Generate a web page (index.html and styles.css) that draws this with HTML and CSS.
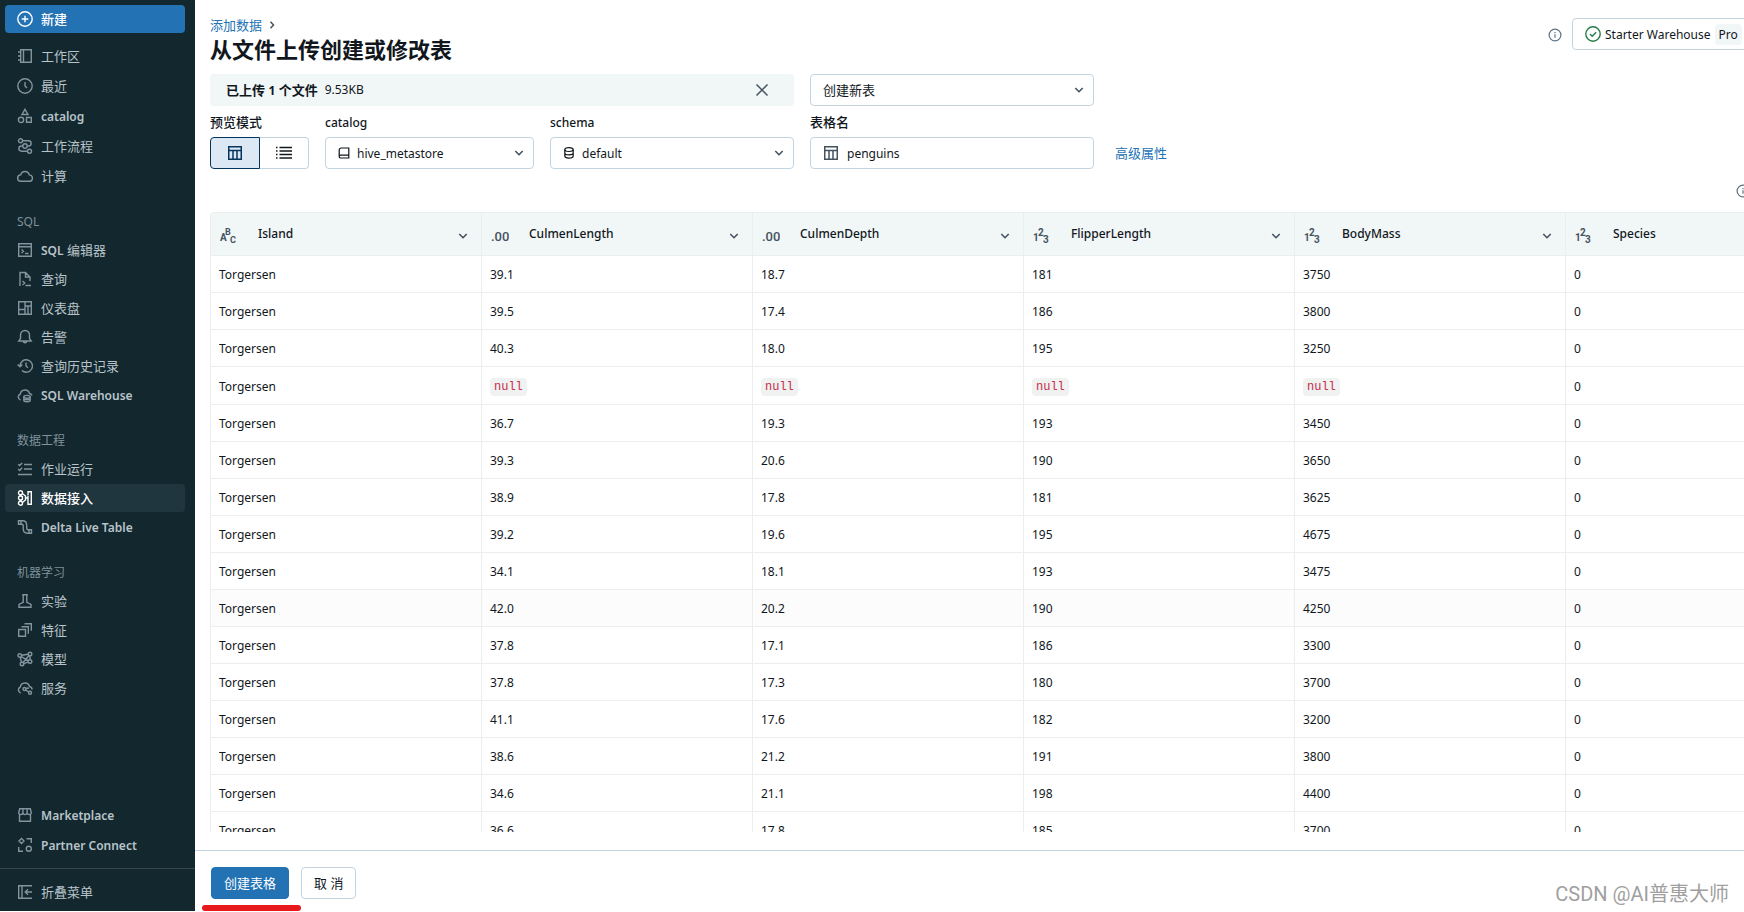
FILE: index.html
```
<!DOCTYPE html>
<html lang="zh-CN">
<head>
<meta charset="utf-8">
<title>从文件上传创建或修改表</title>
<link rel="stylesheet" href="styles.css">
</head>
<body>
<svg class="defs" aria-hidden="true">
  <symbol id="chev" viewBox="0 0 10 10"><path d="M1.300 3 5 6.700l3.700-3.700" stroke-width="1.600"/></symbol>
  <symbol id="info" viewBox="0 0 14 14"><circle cx="7" cy="7" r="5.900" stroke-width="1.200"/><path d="M7 6.200v3.600M7 4v1.200" stroke-width="1.200"/></symbol>
  <symbol id="grid" viewBox="0 0 16 16"><path d="M1.750 1.750h12.500v12.500H1.750zM1.750 5.500h12.500M6 5.500v8.700M10 5.500v8.700" stroke-width="1.500"/></symbol>
</svg>
<div class="app">
  <nav class="side">
    <button class="new"><svg class="ic" viewBox="0 0 16 16"><circle cx="8" cy="8" r="7.200"/><path d="M8 4.700v6.600M4.700 8h6.600"/></svg>新建</button>
    <div class="group roomy">
      <a class="item" href="#"><svg class="ic" viewBox="0 0 16 16"><path d="M3.700 1.700h10.600v12.600H3.700zM6.500 1.700v12.600M1 4h2.700M1 8h2.700M1 12h2.700"/></svg>工作区</a>
      <a class="item" href="#"><svg class="ic" viewBox="0 0 16 16"><circle cx="8" cy="8" r="7.200"/><path d="M8 4v4l2 2"/></svg>最近</a>
      <a class="item" href="#"><svg class="ic" viewBox="0 0 16 16"><path d="M8 1.300 11 6.500H5zM9.500 9.500h4.800v4.800H9.500z"/><circle cx="4" cy="11.900" r="2.600"/></svg><span class="lat">catalog</span></a>
      <a class="item" href="#"><svg class="ic" viewBox="0 0 16 16"><circle cx="3.500" cy="2.800" r="2"/><circle cx="12.500" cy="13.200" r="2"/><circle cx="8" cy="8" r="2.200"/><path d="M5.500 2.800h6a2.600 2.600 0 0 1 0 5.200H10.200M5.800 8H4.500a2.600 2.600 0 0 0 0 5.200h6"/></svg>工作流程</a>
      <a class="item" href="#"><svg class="ic" viewBox="0 0 16 16"><path d="M4 13.300a3.200 3.200 0 0 1-.300-6.400 4.400 4.400 0 0 1 8.600 0 3.200 3.200 0 0 1-.100 6.400z"/></svg>计算</a>
    </div>
    <h2 class="head"><span class="lat">SQL</span></h2>
    <div class="group">
      <a class="item" href="#"><svg class="ic" viewBox="0 0 16 16"><path d="M1.700 1.700h12.600v12.600H1.700zM1.700 4.800h12.600M4.500 7.500 6.500 9.300l-2 1.800M8 11.500h3.500"/></svg><span><span class="lat">SQL</span> 编辑器</span></a>
      <a class="item" href="#"><svg class="ic" viewBox="0 0 16 16"><path d="M3 15V1.500h5.500l4.500 4.500v4M8.500 1.500V6H13M5.500 10l2.200 2-2.200 2M8.500 14.500H14"/></svg>查询</a>
      <a class="item" href="#"><svg class="ic" viewBox="0 0 16 16"><path d="M1.700 1.700h12.600v12.600H1.700zM8 1.700v12.600M1.700 9.500H8M8 6h6.300M11 6v8"/></svg>仪表盘</a>
      <a class="item" href="#"><svg class="ic" viewBox="0 0 16 16"><path d="M1.800 12h12.400L12.500 9.500V6a4.500 4.500 0 0 0-9 0v3.500zM6.200 12.500a1.900 1.900 0 0 0 3.600 0"/></svg>告警</a>
      <a class="item" href="#"><svg class="ic" viewBox="0 0 16 16"><path d="M3 8a6.200 6.200 0 1 1 2 4.600M.6 6.500 3 8.800l2.300-2.300M9 4.500V8l2 1.700"/></svg>查询历史记录</a>
      <a class="item" href="#"><svg class="ic" viewBox="0 0 16 16"><path d="M3.500 13A3.200 3.200 0 0 1 3.300 7a4.700 4.700 0 0 1 9.200-.500 3 3 0 0 1 2.500 2"/><ellipse cx="10" cy="9.800" rx="3.200" ry="1.400"/><path d="M6.800 9.800v3.400c0 .9 1.400 1.500 3.200 1.500s3.200-.6 3.200-1.500V9.800M6.800 11.800c1 1.200 5.400 1.200 6.400 0"/></svg><span class="lat">SQL Warehouse</span></a>
    </div>
    <h2 class="head">数据工程</h2>
    <div class="group">
      <a class="item" href="#"><svg class="ic" viewBox="0 0 16 16"><path d="M7 3.500h8M7 8h8M1 13.500h14M1.200 3.200l1.400 1.400L5.200 2M1.200 8l1.400 1.400 2.600-2.600"/></svg>作业运行</a>
      <a class="item on" href="#"><svg class="ic" viewBox="0 0 16 16"><circle cx="3.500" cy="2.800" r="2"/><circle cx="3.500" cy="13.200" r="2"/><circle cx="3.500" cy="8" r="2"/><path d="M5.300 3.500 8.500 6v4l-3.200 2.500M2 4.500l4 2.500M2 11.500l4-2.500M8.500 8H11M11 5V1.700h3.300v12.600H11V5.500"/></svg>数据接入</a>
      <a class="item" href="#"><svg class="ic" viewBox="0 0 16 16"><path d="M1.500 1.800v3.400H5c1 0 1.200.6 1.200 1.400v3c0 3 1.500 4.600 4.300 4.600h4v-3.400H11c-1 0-1.300-.6-1.300-1.500v-3C9.700 3.200 8 1.800 5.500 1.800zM4 1.800v3.400M12 10.800v3.400"/></svg><span class="lat">Delta Live Table</span></a>
    </div>
    <h2 class="head">机器学习</h2>
    <div class="group">
      <a class="item" href="#"><svg class="ic" viewBox="0 0 16 16"><path d="M5.200 1.700h5.600M6.200 1.700v7.600L2 11.500v2.800h12v-2.800L9.800 9.300V1.700"/></svg>实验</a>
      <a class="item" href="#"><svg class="ic" viewBox="0 0 16 16"><path d="M1.700 7.500h6.800v6.800H1.700zM4.500 4.700h6.800v7M7.500 1.700h6.800v7"/></svg>特征</a>
      <a class="item" href="#"><svg class="ic" viewBox="0 0 16 16"><circle cx="2.800" cy="4.500" r="1.800"/><circle cx="13" cy="3" r="1.800"/><circle cx="13" cy="10.500" r="1.800"/><circle cx="5" cy="13" r="1.800"/><path d="M4.600 4.300 11.200 3.200M3.200 6.300l1.300 4.900M4.200 5.700l7.200 4M6.700 12.500l4.600-1.400M12 4.500 6 11.500M13 4.800v3.900"/></svg>模型</a>
      <a class="item" href="#"><svg class="ic" viewBox="0 0 16 16"><path d="M3.800 13A3.200 3.200 0 0 1 3.300 7a4.700 4.700 0 0 1 9.200-.500 3.200 3.200 0 0 1 2.600 3M8.400 9.800l3.500 2.200"/><circle cx="7.500" cy="9" r="1.500"/><circle cx="13" cy="12.700" r="1.500"/><path d="M9 8.500 12 8"/></svg>服务</a>
    </div>
    <div class="group roomy low">
      <a class="item" href="#"><svg class="ic" viewBox="0 0 16 16"><path d="M2.500 7.500v6.800h11V7.500M2.700 1.700h10.600l1 3.800a2.100 2.100 0 0 1-4.200 0 2.100 2.100 0 0 1-4.200 0 2.100 2.100 0 0 1-4.200 0zM5.900 5.500V1.700M10.100 5.500V1.700"/></svg><span class="lat">Marketplace</span></a>
      <a class="item" href="#"><svg class="ic" viewBox="0 0 16 16"><path d="M4.500 1.500 7 4 4.500 6.500 2 4zM9.500 1.700h4.800V6M1.700 10v4.300H6"/><circle cx="11.800" cy="11.800" r="2.500"/></svg><span class="lat">Partner Connect</span></a>
    </div>
    <div class="fold"><button class="item"><svg class="ic" viewBox="0 0 16 16"><path d="M15 1.700H1.700v12.600H15M5 1.700v12.600M15 8H8.500M11 5.200 8.200 8l2.800 2.800"/></svg>折叠菜单</button></div>
  </nav>
  <main class="main">
    <header class="top">
      <div class="titles">
        <div class="crumb"><a href="#">添加数据</a><svg class="sep" viewBox="0 0 10 10"><path d="m3.500 1.800 3 3.200-3 3.200" stroke-width="1.500"/></svg></div>
        <h1>从文件上传创建或修改表</h1>
      </div>
      <svg class="info"><use href="#info"/></svg>
      <button class="wh"><svg class="ic ok" viewBox="0 0 16 16"><circle cx="8" cy="8" r="7.200"/><path d="m5 8 2.200 2.200 4-4"/></svg><span>Starter Warehouse</span><span class="tag">Pro</span></button>
    </header>
    <section class="form">
      <div class="upload"><b>已上传 <span class="lat">1</span> 个文件</b><span class="lat">9.53KB</span><button class="x" aria-label="关闭"><svg viewBox="0 0 14 14"><path d="m1.500 1.500 11 11M12.500 1.500l-11 11" stroke-width="1.500"/></svg></button></div>
      <div class="box mode"><select aria-label="模式"><option>创建新表</option></select><svg class="chev"><use href="#chev"/></svg></div>
      <div class="field f1"><span class="label">预览模式</span>
        <div class="seg"><button class="sel" aria-label="表格"><svg class="ic"><use href="#grid"/></svg></button><button aria-label="列表"><svg class="ic" viewBox="0 0 16 16"><path d="M3.500 2.500H16M3.500 6H16M3.500 9.500H16M3.500 13H16M0 2.500h1.500M0 6h1.500M0 9.500h1.500M0 13h1.500"/></svg></button></div></div>
      <div class="field"><label class="label lat" for="cat">catalog</label>
        <div class="box"><svg class="sm" viewBox="0 0 12 12"><path d="M3.200 1h7.600v10H2.500A1.400 1.400 0 0 1 1.200 9.600V3a2 2 0 0 1 2-2zM10.800 8.200H2.500a1.400 1.400 0 0 0-1.300 1.400"/></svg><select id="cat"><option>hive_metastore</option></select><svg class="chev"><use href="#chev"/></svg></div></div>
      <div class="field"><label class="label lat" for="sch">schema</label>
        <div class="box"><svg class="sm" viewBox="0 0 12 12"><ellipse cx="6" cy="2.600" rx="4.200" ry="1.900"/><path d="M1.800 2.600v6.500c0 1.100 1.900 2 4.200 2s4.200-.9 4.200-2V2.600M1.800 5.900c0 1.100 1.900 1.900 4.200 1.900s4.200-.8 4.200-1.900"/></svg><select id="sch"><option>default</option></select><svg class="chev"><use href="#chev"/></svg></div></div>
      <div class="field"><label class="label" for="tn">表格名</label>
        <div class="box name"><svg class="ic"><use href="#grid"/></svg><input id="tn" value="penguins"></div></div>
      <a class="adv" href="#">高级属性</a>
    </section>
    <div class="hint"><svg class="info"><use href="#info"/></svg></div>
    <div class="scroll">
      <table>
        <thead><tr id="head"></tr></thead>
        <tbody id="rows"></tbody>
      </table>
    </div>
    <footer class="foot"><button class="primary">创建表格</button><button class="plain">取 消</button></footer>
  </main>
</div>
<div class="mark"></div>
<div class="wm">CSDN @AI普惠大师</div>
<script src="table.js"></script>
</body>
</html>
```
FILE: table.js
```
const icons = {
  abc: '<text x="0" y="14" font-size="10">A</text><text x="5" y="8" font-size="9">B</text><text x="10" y="16" font-size="9">C</text>',
  dec: '<text class="wide" x="0" y="14" font-size="13">.00</text>',
  int: '<text x="0" y="14" font-size="10">1</text><text x="5" y="9" font-size="10">2</text><text x="10" y="16" font-size="10">3</text>'
};
const cols = [["Island", "abc"], ["CulmenLength", "dec"], ["CulmenDepth", "dec"], ["FlipperLength", "int"], ["BodyMass", "int"], ["Species", "int"]];
const data = [
  ["39.1", "18.7", 181, 3750], ["39.5", "17.4", 186, 3800], ["40.3", "18.0", 195, 3250], [null, null, null, null],
  ["36.7", "19.3", 193, 3450], ["39.3", "20.6", 190, 3650], ["38.9", "17.8", 181, 3625], ["39.2", "19.6", 195, 4675],
  ["34.1", "18.1", 193, 3475], ["42.0", "20.2", 190, 4250], ["37.8", "17.1", 186, 3300], ["37.8", "17.3", 180, 3700],
  ["41.1", "17.6", 182, 3200], ["38.6", "21.2", 191, 3800], ["34.6", "21.1", 198, 4400], ["36.6", "17.8", 185, 3700]
];
document.getElementById("head").innerHTML = cols.map(([name, type]) =>
  `<th scope="col"><div class="th"><svg class="type" viewBox="0 0 18 18">${icons[type]}</svg><span>${name}</span><svg class="chev"><use href="#chev"/></svg></div></th>`).join("");
document.getElementById("rows").innerHTML = data.map((row, i) =>
  `<tr${i === 9 ? ' class="hover"' : ""}>` + ["Torgersen", ...row, 0].map(v => `<td>${v === null ? "<code>null</code>" : v}</td>`).join("") + "</tr>").join("");
```
FILE: styles.css
```
* { box-sizing: border-box; }
body { margin: 0; overflow: hidden; background: #fff; color: #11171c; font: 13px/20px "Noto Sans", "Noto Sans CJK SC", sans-serif; }
button, input, select { font: inherit; color: inherit; margin: 0; }
button { cursor: pointer; }
a { color: #2272b4; text-decoration: none; }
svg { fill: none; stroke: currentColor; flex: none; }
.defs { position: absolute; width: 0; height: 0; }
.lat { font-size: 12px; }
.ic { width: 16px; height: 16px; stroke-width: 1.4; }
.chev { width: 10px; height: 10px; color: #44535f; }
.info { width: 14px; height: 14px; color: #5f7281; }

.app { display: flex; height: 100vh; padding-bottom: 1px; }
.side { width: 195px; flex: none; background: #13272e; display: flex; flex-direction: column; padding-top: 5px; }
.new, .item { display: flex; align-items: center; gap: 8px; height: 28px; margin: 0 10px 0 5px; padding: 0 12px; border: 0; border-radius: 4px; background: none; white-space: nowrap; }
.new { background: #2272b4; color: #fff; font-weight: 500; margin-bottom: 9px; }
.item { color: #b8c4ca; font-weight: 400; }
.item .ic { color: #82949e; }
.item .lat { font-weight: 600; }
.item > .lat { padding-top: 2px; }
.item.on { background: #20363f; color: #fff; font-weight: 500; }
.item.on .ic { color: #fff; }
.group { display: flex; flex-direction: column; gap: 1px; margin-bottom: 18px; }
.roomy { gap: 2px; }
.low { margin: auto 0 9px; }
.head { margin: 0; padding-left: 17px; font-size: 12px; font-weight: 400; line-height: 28px; color: #7f919b; }
.fold { border-top: 1px solid #37474e; padding: 9px 0 5px; }

.main { flex: 1; min-width: 0; display: flex; flex-direction: column; overflow: hidden; }
.top { display: flex; align-items: flex-start; padding: 15px 0 0 15px; margin-right: -84px; }
.titles { flex: 1; }
.crumb { display: flex; align-items: center; gap: 5px; }
.sep { width: 10px; height: 10px; color: #44535f; }
h1 { margin: 0; padding-bottom: 2px; font-size: 22px; line-height: 28px; font-weight: 700; }
.top .info { margin: 13px 10px 0 0; }
.wh { display: flex; align-items: center; gap: 4px; width: 256px; height: 32px; margin-top: 3px; padding: 0 12px; background: #fff; border: 1px solid #c3d4e1; border-radius: 4px; font-size: 12px; line-height: 20px; }
.wh span { padding-top: 1px; }
.ok { color: #277c43; }
.wh .tag { background: #f1f6f7; border-radius: 4px; padding: 1px 4px 0; }

.form { display: grid; grid-template-columns: 99px minmax(150px, 209px) minmax(170px, 244px) minmax(200px, 284px) auto; column-gap: 16px; row-gap: 6px; padding: 9px 15px 0; }
.upload { grid-column: 1 / 4; display: flex; align-items: center; gap: 7px; height: 32px; padding: 0 25px 0 16px; border-radius: 4px; background: #f1f6f7; }
.upload b { font-weight: 700; }
.x { margin-left: auto; padding: 0; width: 14px; height: 14px; border: 0; background: none; color: #44535f; display: flex; }
.x svg { width: 14px; height: 14px; }
.box { display: flex; align-items: center; gap: 7px; height: 32px; padding: 0 9px 0 12px; border: 1px solid #c3d4e1; border-radius: 4px; background: #fff; }
.box select, .box input { flex: 1; min-width: 0; height: 30px; padding: 1px 0 0; border: 0; outline: 0; background: none; appearance: none; font-size: 12px; }
.box.mode { grid-column: 4; }
.box.mode select { padding: 0; font-size: 13px; }
.box .sm { width: 12px; height: 12px; color: #11171c; stroke-width: 1.2; }
.box.name { gap: 8px; }
.name .ic { color: #44535f; }
.field { display: flex; flex-direction: column; gap: 5px; }
.f1 { grid-column: 1; }
.label { font-weight: 500; line-height: 20px; white-space: nowrap; }
.label.lat { line-height: 22px; margin-bottom: -2px; }
.seg { display: flex; height: 32px; }
.seg button { flex: 1; display: flex; align-items: center; justify-content: center; padding: 0; border: 1px solid #c3d4e1; border-left: 0; border-radius: 0 4px 4px 0; background: #fff; }
.seg .sel { border: 1px solid #04355d; border-radius: 4px 0 0 4px; background: #dce8f3; color: #04355d; }
.adv { align-self: end; padding: 0 5px 6px; }

.hint { display: flex; justify-content: flex-end; margin: 15px -6px 14px 0; }
.scroll { flex: 1; min-height: 0; overflow: hidden; margin: 0 0 18px 15px; }
table { width: 1627px; table-layout: fixed; border-collapse: separate; border-spacing: 0; border-top: 1px solid #ebeeef; border-left: 1px solid #ebeeef; border-top-left-radius: 4px; font-size: 12px; }
th, td { text-align: left; border-right: 1px solid #ebeeef; border-bottom: 1px solid #ebeeef; }
th { height: 43px; padding: 4px 13px 0 9px; background: #f1f6f7; font-weight: 500; }
.th { display: flex; align-items: center; }
.th span { flex: 1; margin-bottom: 4px; }
.type { width: 18px; height: 18px; margin-right: 20px; }
.type text { fill: #44535f; stroke: none; font-family: Roboto, sans-serif; font-weight: 700; }
.type .wide { font-weight: 500; }
td { height: 37px; padding: 9px 8px 7px; line-height: 20px; }
.hover td { background: #fcfcfc; }
code { display: inline-block; margin: 1px 0; padding: 0 4px; border-radius: 4px; background: #f0f1f1; color: #c82d4c; font: 12px/18px "Liberation Mono", monospace; }

.foot { display: flex; gap: 12px; padding: 16px 16px 12px; border-top: 1px solid #c3d4e1; }
.foot button { height: 32px; padding: 0 12px; border-radius: 4px; border: 1px solid #c3d4e1; background: #fff; }
.foot .primary { border-color: #2272b4; background: #2272b4; color: #fff; }
.mark { position: absolute; left: 202px; bottom: 1px; width: 99px; height: 6px; border-radius: 3px; background: #e8191d; }
.wm { position: absolute; right: 15px; bottom: 3px; font: 20px/30px Roboto, "Noto Sans CJK SC", sans-serif; color: #a0a0a0; }
```
